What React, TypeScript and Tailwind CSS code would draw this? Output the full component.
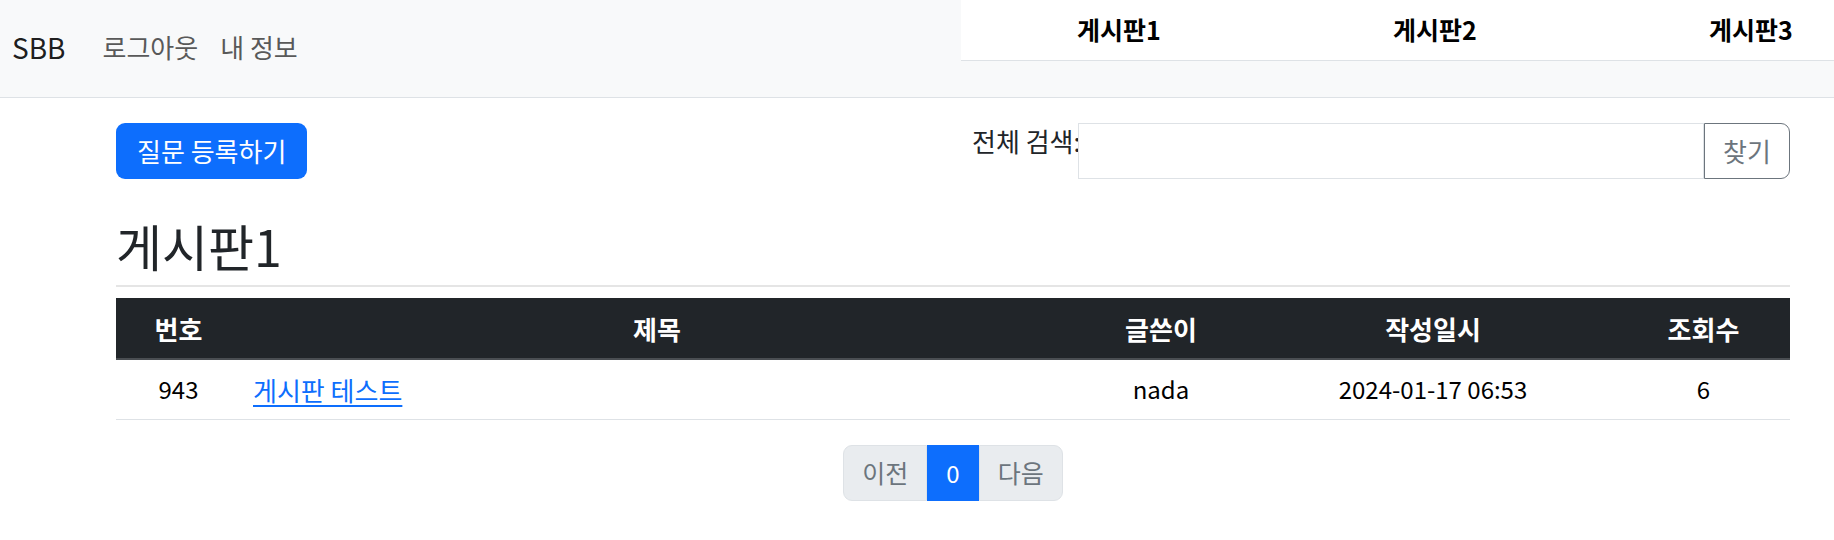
import React from 'react';

const TABS = ['게시판1', '게시판2', '게시판3'];

const POSTS = [
    { id: 943, title: '게시판 테스트', author: 'nada', date: '2024-01-17 06:53', views: 6 }
];

export default function App() {
    return (
        <div className="w-full min-h-[540px] overflow-hidden bg-white text-[#212529] font-['Noto_Sans_CJK_KR','Noto_Sans',sans-serif]">
            {/* Navbar */}
            <nav className="flex h-[98px] bg-[#f8f9fa] border-b border-[#dee2e6]">
                <div className="flex items-center w-[961px] shrink-0 pl-[12px] pb-[3px]">
                    <a className="text-[28px] leading-[45px] text-black/90 mr-[26px]">SBB</a>
                    <a className="text-[26px] leading-[36px] px-[11px] text-[#595959]">로그아웃</a>
                    <a className="text-[26px] leading-[36px] px-[11px] text-[#595959]">내 정보</a>
                </div>
                <div className="flex self-start shrink-0 w-[960px] h-[61px] bg-white border-b border-[#dee2e6]">
                    {TABS.map(tab => (
                        <div key={tab} className="w-[316px] flex items-center justify-center text-[25px] font-bold text-black">
                            {tab}
                        </div>
                    ))}
                </div>
            </nav>

            <main className="ml-[116px] w-[1674px]">
                {/* Actions */}
                <div className="flex justify-between items-start mt-[25px] h-[56px]">
                    <button className="h-[56px] px-[21px] rounded-[9px] bg-[#0d6efd] text-white text-[26px] leading-[36px]">
                        질문 등록하기
                    </button>
                    <div className="flex items-start">
                        <label className="w-[106px] text-[26px] leading-[36px] whitespace-nowrap">전체 검색:</label>
                        <input className="relative w-[626px] h-[56px] border border-[#dee2e6] bg-white px-[18px] text-[24px] outline-none" />
                        <button className="w-[86px] h-[56px] border border-[#6c757d] rounded-r-[9px] text-[#6c757d] text-[26px] leading-[36px]">
                            찾기
                        </button>
                    </div>
                </div>

                {/* Title */}
                <h2 className="mt-[37px] text-[50px] leading-[58px] font-normal pb-[11px] border-b-2 border-[#e5e5e5]">게시판1</h2>

                {/* Table */}
                <table className="mt-[11px] w-full table-fixed border-collapse text-[24px]">
                    <thead>
                        <tr className="h-[61px] bg-[#212529] text-white text-[26px] border-b-2 border-[#4a4e52]">
                            <th className="w-[125px] font-bold text-center">번호</th>
                            <th className="w-[832px] font-bold text-center">제목</th>
                            <th className="w-[176px] font-bold text-center">글쓴이</th>
                            <th className="w-[368px] font-bold text-center">작성일시</th>
                            <th className="w-[173px] font-bold text-center">조회수</th>
                        </tr>
                    </thead>
                    <tbody>
                        {POSTS.map(post => (
                            <tr key={post.id} className="h-[60px] border-b border-[#dee2e6] text-black">
                                <td className="text-center">{post.id}</td>
                                <td className="px-[12px] text-left">
                                    <a className="text-[26px] text-[#0d6efd] underline underline-offset-[4px]">{post.title}</a>
                                </td>
                                <td className="text-center">{post.author}</td>
                                <td className="text-center">{post.date}</td>
                                <td className="text-center">{post.views}</td>
                            </tr>
                        ))}
                    </tbody>
                </table>

                {/* Pagination */}
                <div className="flex justify-center mt-[25px]">
                    <div className="flex h-[56px] text-[25px]">
                        <span className="flex items-center px-[18px] bg-[#e9ecef] border border-[#dee2e6] rounded-l-[9px] text-[#6c757d]">이전</span>
                        <span className="flex items-center px-[18px] bg-[#0d6efd] border border-[#0d6efd] text-white text-[24px]">0</span>
                        <span className="flex items-center px-[18px] bg-[#e9ecef] border border-[#dee2e6] rounded-r-[9px] text-[#6c757d]">다음</span>
                    </div>
                </div>
            </main>
        </div>
    );
}
